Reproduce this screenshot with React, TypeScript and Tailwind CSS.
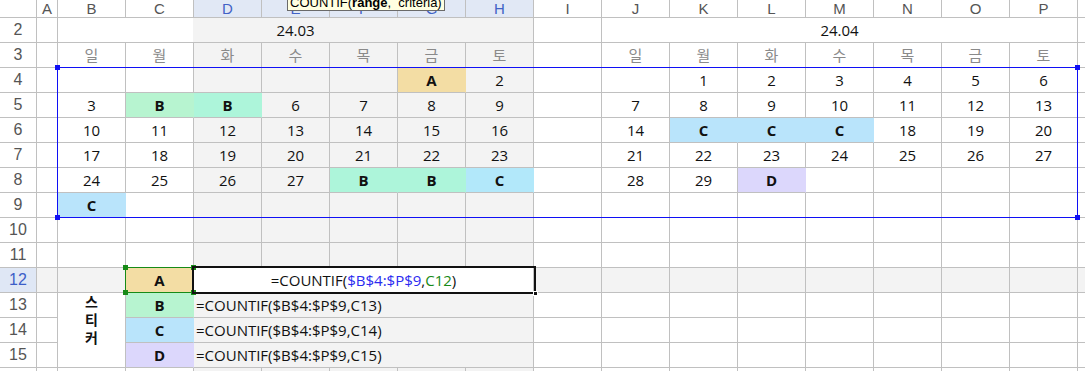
import React from 'react';

const COLS = ['A', 'B', 'C', 'D', 'E', 'F', 'G', 'H', 'I', 'J', 'K', 'L', 'M', 'N', 'O', 'P'];
const SHADE_COLS = ['D', 'E', 'F', 'G', 'H'];

const FILL: Record<string, string> = {
  y: 'bg-[#f3dda4] border-r-transparent',
  g1: 'bg-[#b7f4d0] border-r-transparent',
  g2: 'bg-[#adf5da] border-r-transparent',
  b: 'bg-[#b9e4fb] border-r-transparent',
  b2: 'bg-[#b2e8fa] border-r-transparent',
  p: 'bg-[#dcd7fc] border-r-transparent',
};

const E = '';
const CAL: Record<number, string[]> = {
  3: [E, '일', '월', '화', '수', '목', '금', '토', E, '일', '월', '화', '수', '목', '금', '토'],
  4: [E, E, E, E, E, E, 'A:y', '2', E, E, '1', '2', '3', '4', '5', '6'],
  5: [E, '3', 'B:g1', 'B:g2', '6', '7', '8', '9', E, '7', '8', '9', '10', '11', '12', '13'],
  6: [E, '10', '11', '12', '13', '14', '15', '16', E, '14', 'C:b', 'C:b', 'C:b', '18', '19', '20'],
  7: [E, '17', '18', '19', '20', '21', '22', '23', E, '21', '22', '23', '24', '25', '26', '27'],
  8: [E, '24', '25', '26', '27', 'B:g2', 'B:g2', 'C:b2', E, '28', '29', 'D:p', E, E, E, E],
  9: [E, 'C:b', E, E, E, E, E, E, E, E, E, E, E, E, E, E],
  10: Array(16).fill(E),
  11: Array(16).fill(E),
  16: Array(16).fill(E),
};

const cellBase =
  'h-[25px] border-r border-b border-[#c0c0c0] flex items-center justify-center overflow-hidden whitespace-nowrap text-[15px]';
const rowHead =
  "h-[25px] border-r border-b border-[#c0c0c0] flex items-center justify-center text-[16px] font-['Liberation_Sans',sans-serif]";

function RowHeader({ n, active }: { n: number; active?: boolean }) {
  return (
    <div className={`${rowHead} ${active ? 'bg-[#dfe7f5] text-[#3c5ec8]' : 'bg-white text-[#555]'}`}>{n}</div>
  );
}

function DataCell({ col, value, row }: { col: string; value: string; row: number }) {
  const [text, fill] = value.split(':');
  const shaded = SHADE_COLS.includes(col) || row === 12;
  const bg = fill ? FILL[fill] : shaded ? 'bg-[#f3f3f3]' : 'bg-white';
  const isLetter = !!fill;
  const textCls = row === 3 ? 'text-[#8a8a8a]' : isLetter ? 'text-[12px] font-bold text-[#111]' : 'text-[#111]';
  return <div className={`${cellBase} ${bg} ${textCls}`}>{text}</div>;
}

function Formula({ n }: { n: number }) {
  return (
    <div className={`${cellBase} col-span-5 bg-[#f3f3f3] justify-start pl-[2px] text-[#111]`}>
      =COUNTIF($B$4:$P$9,C{n})
    </div>
  );
}

function QCell({ shaded }: { shaded?: boolean }) {
  return <div className={`h-[25px] border-b border-[#c0c0c0] ${shaded ? 'bg-[#f3f3f3]' : 'bg-white'}`} />;
}

function CalRow({ r }: { r: number }) {
  return (
    <>
      <RowHeader n={r} />
      {COLS.map((c, i) => (
        <DataCell key={c} col={c} row={r} value={CAL[r][i]} />
      ))}
      <QCell />
    </>
  );
}

export default function App() {
  return (
    <div className="relative w-[1085px] h-[371px] overflow-hidden bg-white text-[#111] font-['Open_Sans','Noto_Sans_CJK_KR',sans-serif]">
      <div className="grid grid-cols-[37px_21px_repeat(15,68px)_7px]">
        {/* column headers */}
        <div className="h-[18px] border-r border-b border-[#c0c0c0] bg-white" />
        {COLS.map((c) => {
          const active = SHADE_COLS.includes(c);
          return (
            <div
              key={c}
              className={`h-[18px] border-r border-b border-[#c0c0c0] flex items-center justify-center text-[15px] leading-none font-['Liberation_Sans',sans-serif] ${
                active ? 'bg-[#e1e8f5] text-[#4162c6]' : 'bg-white text-[#555]'
              }`}
            >
              {c}
            </div>
          );
        })}
        <div className="h-[18px] border-b border-[#c0c0c0] bg-white" />

        {/* row 2 */}
        <RowHeader n={2} />
        <div className={`${cellBase} bg-white`} />
        <div className={`${cellBase} col-span-7 bg-[linear-gradient(to_right,#ffffff_135px,#f3f3f3_135px)]`}>24.03</div>
        <div className={`${cellBase} bg-white`} />
        <div className={`${cellBase} col-span-7 bg-white`}>24.04</div>
        <QCell />

        {[3, 4, 5, 6, 7, 8, 9, 10, 11].map((r) => (
          <CalRow key={r} r={r} />
        ))}

        {/* row 12 */}
        <RowHeader n={12} active />
        <div className={`${cellBase} bg-[#f3f3f3]`} />
        <div className={`${cellBase} bg-[#f3f3f3]`} />
        <div className={`${cellBase} ${FILL.y} text-[12px] font-bold`}>A</div>
        <div className={`${cellBase} col-span-5 bg-white`}>
          <span>=COUNTIF(</span>
          <span className="text-[#2b2bf0]">$B$4:$P$9</span>
          <span>,</span>
          <span className="text-[#178a17]">C12</span>
          <span>)</span>
        </div>
        {['I', 'J', 'K', 'L', 'M', 'N', 'O', 'P'].map((c) => (
          <div key={c} className={`${cellBase} bg-[#f3f3f3]`} />
        ))}
        <QCell shaded />

        {/* row 13 */}
        <RowHeader n={13} />
        <div className={`${cellBase} bg-white`} />
        <div className="row-span-3 border-r border-b border-[#c0c0c0] bg-white flex flex-col items-center justify-start text-[14px] leading-[18px] font-bold text-[#111]">
          <span>스</span>
          <span>티</span>
          <span>커</span>
        </div>
        <div className={`${cellBase} ${FILL.g1} text-[12px] font-bold`}>B</div>
        <Formula n={13} />
        {['I', 'J', 'K', 'L', 'M', 'N', 'O', 'P'].map((c) => (
          <div key={c} className={`${cellBase} bg-white`} />
        ))}
        <QCell />

        {/* row 14 */}
        <RowHeader n={14} />
        <div className={`${cellBase} bg-white`} />
        <div className={`${cellBase} ${FILL.b} text-[12px] font-bold`}>C</div>
        <Formula n={14} />
        {['I', 'J', 'K', 'L', 'M', 'N', 'O', 'P'].map((c) => (
          <div key={c} className={`${cellBase} bg-white`} />
        ))}
        <QCell />

        {/* row 15 */}
        <RowHeader n={15} />
        <div className={`${cellBase} bg-white`} />
        <div className={`${cellBase} ${FILL.p} text-[12px] font-bold`}>D</div>
        <Formula n={15} />
        {['I', 'J', 'K', 'L', 'M', 'N', 'O', 'P'].map((c) => (
          <div key={c} className={`${cellBase} bg-white`} />
        ))}
        <QCell />

        <CalRow r={16} />
      </div>

      {/* blue range selection B4:P9 */}
      <div className="absolute left-[57px] top-[67px] w-[1021px] h-[151px] border border-[#1010f5]">
        <div className="absolute -left-[3px] -top-[3px] w-[5px] h-[5px] bg-[#1010f5]" />
        <div className="absolute -right-[3px] -top-[3px] w-[5px] h-[5px] bg-[#1010f5]" />
        <div className="absolute -left-[3px] -bottom-[3px] w-[5px] h-[5px] bg-[#1010f5]" />
        <div className="absolute -right-[3px] -bottom-[3px] w-[5px] h-[5px] bg-[#1010f5]" />
      </div>

      {/* green reference C12 */}
      <div className="absolute left-[125px] top-[267px] w-[69px] h-[26px] border border-[#178a17]">
        <div className="absolute -left-[3px] -top-[3px] w-[5px] h-[5px] bg-[#178a17]" />
        <div className="absolute -right-[3px] -top-[3px] w-[5px] h-[5px] bg-[#178a17]" />
        <div className="absolute -left-[3px] -bottom-[3px] w-[5px] h-[5px] bg-[#178a17]" />
        <div className="absolute -right-[3px] -bottom-[3px] w-[5px] h-[5px] bg-[#178a17]" />
      </div>

      {/* active cell D12:H12 */}
      <div className="absolute left-[192px] top-[266px] w-[344px] h-[28px] border-2 border-[#111]">
        <div className="absolute -right-[4px] -bottom-[4px] w-[5px] h-[5px] bg-[#111] border border-white" />
      </div>

      {/* function tooltip */}
      <div className="absolute left-[287px] -top-[5px] h-[16px] px-[2px] bg-[#ffffe1] border border-[#6a6a6a] text-[13px] leading-[14px] text-black whitespace-nowrap font-['Liberation_Sans',sans-serif]">
        COUNTIF(<b>range</b>,&nbsp; criteria)
      </div>
    </div>
  );
}
